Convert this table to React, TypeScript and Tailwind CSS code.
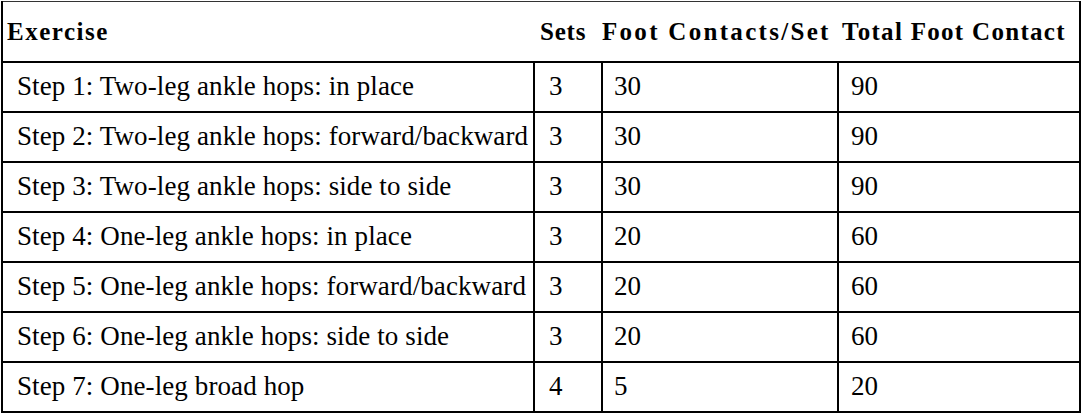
const rows = [
  { ex: "Step 1: Two-leg ankle hops: in place", sets: "3", per: "30", total: "90" },
  { ex: "Step 2: Two-leg ankle hops: forward/backward", sets: "3", per: "30", total: "90" },
  { ex: "Step 3: Two-leg ankle hops: side to side", sets: "3", per: "30", total: "90" },
  { ex: "Step 4: One-leg ankle hops: in place", sets: "3", per: "20", total: "60" },
  { ex: "Step 5: One-leg ankle hops: forward/backward", sets: "3", per: "20", total: "60" },
  { ex: "Step 6: One-leg ankle hops: side to side", sets: "3", per: "20", total: "60" },
  { ex: "Step 7: One-leg broad hop", sets: "4", per: "5", total: "20" },
];

export default function App() {
  return (
    <div className="bg-white w-[1082px] h-[415px] pt-[1px] pl-[1px] text-black">
      <table className="w-[1078px] border-collapse border-2 border-t border-black border-t-[#333] table-fixed font-['Liberation_Serif','Times_New_Roman',serif]">
        <colgroup>
          <col className="w-[532px]" />
          <col className="w-[68px]" />
          <col className="w-[236px]" />
          <col className="w-[242px]" />
        </colgroup>
        <thead>
          <tr className="h-[60px] border-b-2 border-black text-[25px] font-bold tracking-[1.5px]">
            <th className="text-left pl-[4px] font-bold">Exercise</th>
            <th className="text-left pl-[6px] font-bold tracking-[0.8px]">Sets</th>
            <th className="text-left pl-0 font-bold whitespace-nowrap tracking-[2.3px]">Foot Contacts/Set</th>
            <th className="text-left pl-[4px] font-bold whitespace-nowrap tracking-[1.3px]">Total Foot Contact</th>
          </tr>
        </thead>
        <tbody className="text-[27px] tracking-[0.1px]">
          {rows.map((r) => (
            <tr key={r.ex} className="h-[50px] border-b-2 border-black">
              <td className="pl-[14px] border-r-2 border-black whitespace-nowrap">{r.ex}</td>
              <td className="pl-[14px] border-r-2 border-black">{r.sets}</td>
              <td className="pl-[11px] border-r-2 border-black">{r.per}</td>
              <td className="pl-[12px]">{r.total}</td>
            </tr>
          ))}
        </tbody>
      </table>
    </div>
  );
}
